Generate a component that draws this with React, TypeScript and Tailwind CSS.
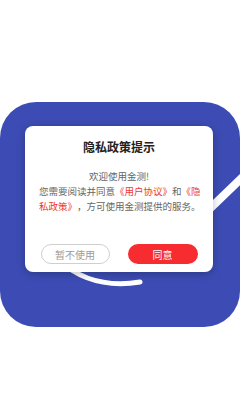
export default function App() {
  return (
    <div className="w-[240px] h-[400px] bg-white overflow-hidden font-['Noto_Sans_CJK_SC',sans-serif] [text-spacing-trim:space-all]">
      <div className="relative mt-[102px] h-[225px] w-[240px] rounded-[36px] bg-[#3c4cb4] overflow-hidden pt-[24px] pl-[25px]">
        <svg className="absolute inset-0" width="240" height="225" viewBox="0 0 240 225">
          <path d="M58 158 Q92 188 140 180" stroke="#fff" strokeWidth="5" strokeLinecap="round" fill="none" />
          <path d="M196 120 L252 66" stroke="#fff" strokeWidth="8" fill="none" />
        </svg>
        <div className="relative w-[188px] h-[146px] rounded-[8px] bg-white shadow-[0_2px_8px_rgba(0,0,0,0.25)] flex flex-col">
          <div className="pt-[13px] text-center text-[12px] leading-[16px] font-bold text-[#222]">隐私政策提示</div>
          <div className="mt-[14px] px-[14px] text-[9.5px] leading-[15px] text-[#666]">
            <div className="text-center whitespace-nowrap">欢迎使用金测!</div>
            <div className="whitespace-nowrap">
              您需要阅读并同意<span className="text-[#ee3535]">《用户协议》</span>和<span className="text-[#ee3535]">《隐</span>
            </div>
            <div className="whitespace-nowrap">
              <span className="text-[#ee3535]">私政策》</span>，方可使用金测提供的服务。
            </div>
          </div>
          <div className="mt-auto mb-[8px] flex justify-center gap-[18px]">
            <div className="w-[69px] h-[20px] rounded-full border border-[#cfcfcf] flex items-center justify-center text-[10px] text-[#999]">暂不使用</div>
            <div className="w-[70px] h-[20px] rounded-full bg-[#f72c31] flex items-center justify-center text-[10px] text-white">同意</div>
          </div>
        </div>
      </div>
    </div>
  );
}
